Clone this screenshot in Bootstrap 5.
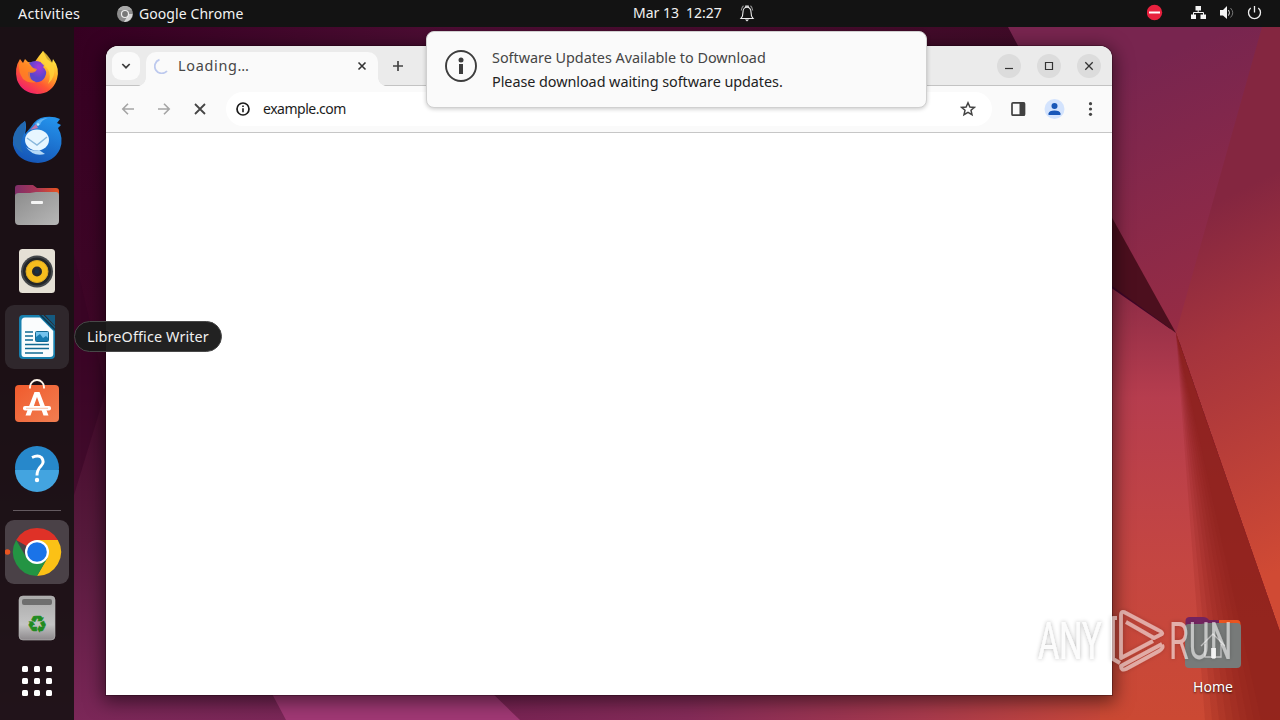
<!DOCTYPE html>
<html lang="en">
<head>
  <meta charset="UTF-8">
  <title>Ubuntu Desktop</title>
  <link href="https://cdn.jsdelivr.net/npm/bootstrap@5.3.0/dist/css/bootstrap.min.css" rel="stylesheet">
  <style>
    body {
      width: 1280px;
      height: 720px;
      font-family: "Noto Sans", "Open Sans", sans-serif;
      font-size: 14px;
      line-height: 20px;
      background: #4a1034;
    }
    svg { display: block; flex: none; }
    .wallpaper { z-index: -1; }
    .top-bar { height: 27px; background: #131313; color: #f2f2f2; }
    .top-bar .activities { margin-left: 18px; width: 99px; font-size: 14.4px; letter-spacing: .22px; }
    .top-bar .app-name { margin-left: 6px; letter-spacing: .08px; }
    .top-bar .clock { left: 633px; top: 3px; letter-spacing: -.02px; white-space: pre; }
    .top-bar .bell { left: 739px; top: 4px; }
    .dock { width: 74px; height: 693px; padding-top: 14px; background: rgba(24, 18, 20, .91); }
    .dock-item { width: 64px; height: 64px; margin-bottom: 2px; border-radius: 9px; flex: none; }
    .dock-item.hovered { background: #2f272c; }
    .dock-item.running { background: #4a4147; }
    .dock-line { width: 48px; height: 1px; margin: 7px 0 9px; background: #645a60; flex: none; }
    .dock-tip {
      left: 74px; top: 321px; width: 148px; height: 31px;
      border: 1px solid #484848; border-radius: 16px;
      background: rgba(25, 25, 25, .96); color: #f0f0f0;
    }
    .dock-tip span { font-size: 14.4px; letter-spacing: .12px; }
    .browser {
      width: 1006px; height: 649px; margin: 19px 0 0 32px;
      border-radius: 12px 12px 0 0; background: #fff;
      box-shadow: 0 0 0 1px rgba(20, 0, 10, .3), 0 4px 18px 3px rgba(0, 0, 0, .5);
    }
    .tab-strip { height: 40px; padding: 6px 11px 0 6px; background: #ebebeb; border-bottom: 1px solid #c3c3c3; border-radius: 12px 12px 0 0; }
    .tab-search { width: 28px; height: 28px; border-radius: 9px; background: #fafafa; }
    .active-tab {
      width: 232px; height: 34px; margin-left: 6px; padding: 0 8px 6px 8px;
      border-radius: 10px 10px 0 0; background: #fafafa; color: #474747;
    }
    .active-tab::before, .active-tab::after {
      content: ""; position: absolute; bottom: 0; width: 8px; height: 8px;
    }
    .active-tab::before { left: -8px; background: radial-gradient(circle at 0 0, transparent 7.5px, #fafafa 8px); }
    .active-tab::after { right: -8px; background: radial-gradient(circle at 100% 0, transparent 7.5px, #fafafa 8px); }
    .tab-title { margin-left: 8px; font-size: 14.4px; letter-spacing: .7px; }
    .win-btn { width: 24px; height: 24px; margin-top: 2px; margin-left: 16px; border-radius: 50%; background: #dcdcdc; }
    .toolbar { height: 47px; padding: 0 11px 0 12px; background: #fafafa; border-bottom: 1px solid #c6c6c6; }
    .address { width: 766px; height: 34px; margin-left: 16px; padding: 0 16px 0 9px; border-radius: 17px; background: #fff; color: #1c1c1c; }
    .address span { font-size: 14px; letter-spacing: -.48px; }
    .notice {
      left: 426px; top: 31px; width: 501px; height: 77px; padding: 18px;
      border: 1px solid #d0d0d0; border-radius: 8px; background: #fafafa;
      box-shadow: 0 1px 4px rgba(0, 0, 0, .22); color: #454545;
    }
    .notice-text { margin-left: 15px; line-height: 24px; margin-top: -4px; white-space: nowrap; font-size: 14.4px; }
    .notice-title { letter-spacing: -.02px; }
    .notice-body { color: #222; letter-spacing: -.05px; }
    .home-icon { left: 1173px; top: 612px; width: 80px; color: #fff; text-shadow: 0 1px 2px rgba(0, 0, 0, .7); }
    .home-icon span { margin-top: 5px; letter-spacing: .05px; }
    .watermark { left: 1030px; top: 600px; }
  </style>
</head>
<body class="position-relative overflow-hidden">

<svg class="wallpaper position-absolute top-0 start-0" width="1280" height="720" viewBox="0 0 1280 720">
  <defs>
    <linearGradient id="base" x1="0" y1="0" x2="0" y2="1">
      <stop offset="0" stop-color="#350021"/><stop offset=".5" stop-color="#400728"/>
      <stop offset=".75" stop-color="#571a3c"/><stop offset="1" stop-color="#7b2758"/>
    </linearGradient>
    <linearGradient id="topEdge" x1="0" y1="0" x2="1" y2="0">
      <stop offset="0" stop-color="#350021"/><stop offset=".35" stop-color="#4c0d33"/><stop offset="1" stop-color="#3d0a25"/>
    </linearGradient>
    <linearGradient id="bottomEdge" x1="490" y1="0" x2="1280" y2="0" gradientUnits="userSpaceOnUse">
      <stop offset="0" stop-color="#782353"/><stop offset=".25" stop-color="#842b58"/>
      <stop offset=".55" stop-color="#a83a4c"/><stop offset=".78" stop-color="#c74739"/><stop offset="1" stop-color="#cb4935"/>
    </linearGradient>
    <linearGradient id="upper" x1="1100" y1="80" x2="1200" y2="330" gradientUnits="userSpaceOnUse">
      <stop offset="0" stop-color="#78254f"/><stop offset="1" stop-color="#972c44"/>
    </linearGradient>
    <linearGradient id="right" x1="1180" y1="220" x2="1340" y2="540" gradientUnits="userSpaceOnUse">
      <stop offset="0" stop-color="#842640"/><stop offset=".35" stop-color="#a5343d"/><stop offset="1" stop-color="#d04a34"/>
    </linearGradient>
    <linearGradient id="lower" x1="0" y1="290" x2="0" y2="720" gradientUnits="userSpaceOnUse">
      <stop offset="0" stop-color="#8e2c46"/><stop offset=".25" stop-color="#b63d4e"/>
      <stop offset=".65" stop-color="#c54641"/><stop offset="1" stop-color="#cb4933"/>
    </linearGradient>
  </defs>
  <rect width="1280" height="720" fill="url(#base)"/>
  <path d="M74 255 106 390 74 495Z" fill="#360423" opacity=".5"/>
  <path d="M74 27H1130V60H74Z" fill="url(#topEdge)"/>
  <path d="M480 690H1280V720H480Z" fill="url(#bottomEdge)"/>
  <path d="M270 690H489L520 720H286Z" fill="#a03874"/>
  <path d="M1008 27H1280V340H1176Z" fill="url(#upper)"/>
  <path d="M1262 27H1280V632L1176 333Z" fill="url(#right)"/>
  <path d="M1100 280 1176 333 1280 632V720H1100Z" fill="url(#lower)"/>
  <!-- soft shadow along the fold, built up from overlapping wedges -->
  <g fill="#861d16" fill-opacity=".16">
    <path d="M1176 333 1280 632V720H1205Z"/><path d="M1176 333 1280 632V720H1212Z"/>
    <path d="M1176 333 1280 632V720H1219Z"/><path d="M1176 333 1280 632V720H1226Z"/>
    <path d="M1176 333 1280 632V720H1233Z"/><path d="M1176 333 1280 632V720H1240Z"/>
    <path d="M1176 333 1280 632V720H1247Z"/><path d="M1176 333 1280 632V720H1254Z"/>
    <path d="M1176 333 1280 632V720H1261Z"/>
  </g>
  <path d="M1100 196 1176 333 1100 277Z" fill="#4c0f1e"/>
</svg>

<header class="top-bar d-flex align-items-center position-relative">
  <span class="activities">Activities</span>
  <svg width="16" height="16" viewBox="0 0 16 16">
    <circle cx="8" cy="8" r="8" fill="#8b8b8b"/>
    <path d="M8 8H15.5A8 8 0 0 1 7 16L10.5 10Z" fill="#d5d5d5"/>
    <path d="M1 4A8 8 0 0 1 15 4H8Z" fill="#a9a9a9"/>
    <circle cx="8" cy="8" r="3.5" fill="#777" stroke="#eee" stroke-width="1.2"/>
  </svg>
  <span class="app-name">Google Chrome</span>
  <span class="clock position-absolute">Mar 13  12:27</span>
  <svg class="bell position-absolute" width="16" height="18" viewBox="0 0 16 18" fill="none" stroke="#eee" stroke-width="1.1">
    <path d="M2 14.5H14C12.5 13 12 11.5 12 8 12 5 10.5 3.3 8 3.3S4 5 4 8C4 11.5 3.5 13 2 14.5ZM6.8 3.3V2H9.2V3.3"/>
    <path d="M2.3 6.5Q2.6 3.2 4.5 1.8M13.7 6.5Q13.4 3.2 11.5 1.8" opacity=".6"/>
    <path d="M6 15.5H10L8 17.5Z" fill="#eee" stroke="none"/>
  </svg>
  <svg class="ms-auto" width="117" height="27" viewBox="1147 0 117 27">
    <circle cx="1154.5" cy="12.500" r="7.700" fill="#e8213e"/>
    <path d="M1149 12.500H1160" stroke="#fff" stroke-width="2"/>
    <path d="M1195.500 6H1201V10.500H1195.500ZM1191 14.500H1196V19H1191ZM1200.500 14.500H1206V19H1200.500Z" fill="#f4f4f4"/>
    <path d="M1198.200 10V12.500M1193.500 15V12.500H1203.500V15" stroke="#f4f4f4" fill="none"/>
    <path d="M1220 10H1223L1227 6V19L1223 15.500H1220Z" fill="#f4f4f4"/>
    <path d="M1228.500 10Q1230.500 12.800 1228.500 15.600" stroke="#ddd" fill="none"/>
    <path d="M1230.500 8Q1235 12.800 1230.500 17.500" stroke="#777" fill="none"/>
    <path d="M1250.700 8A6 6 0 1 0 1258.300 8M1254.500 6V12.500" stroke="#eee" stroke-width="1.300" fill="none"/>
  </svg>
  <span class="me-3"></span>
</header>

<div class="d-flex">
  <nav class="dock d-flex flex-column align-items-center">
    <!-- Firefox -->
    <div class="dock-item">
      <svg width="64" height="64" viewBox="0 0 64 64">
        <defs>
          <linearGradient id="fox" x1=".85" y1=".1" x2=".25" y2="1">
            <stop offset="0" stop-color="#fff04a"/><stop offset=".35" stop-color="#ffab26"/>
            <stop offset=".65" stop-color="#ff5633"/><stop offset="1" stop-color="#ee1a72"/>
          </linearGradient>
          <radialGradient id="globe" cx=".6" cy=".3"><stop offset="0" stop-color="#a838d8"/><stop offset="1" stop-color="#5b45cc"/></radialGradient>
        </defs>
        <path d="M15 18 18 22 20 18 23 21 29 22 34 15 38 10 42 18 47 22 48 18Q55 27 52 38 47 53 32 53 17 52 12 39 9 27 15 18Z" fill="url(#fox)"/>
        <path d="M24 22Q32 17 40 24L38 26Q43 30 40 36 37 42 30 41 22 38 23 31L31 30 27 26Z" fill="url(#globe)"/>
        <path d="M14 22Q20 21 25 26L32 28Q31 32 25 32 24 39 31 41 24 43 18 38Q13 31 14 22Z" fill="#ff8b20" opacity=".75"/>
        <path d="M38 10Q46 17 49 26 51 36 43 43 47 34 42 27 34 22 35 16Z" fill="#ffd33a" opacity=".8"/>
      </svg>
    </div>
    <!-- Thunderbird -->
    <div class="dock-item">
      <svg width="64" height="64" viewBox="0 0 64 64">
        <defs><linearGradient id="bird" x1=".7" y1="0" x2=".3" y2="1"><stop offset="0" stop-color="#2492eb"/><stop offset="1" stop-color="#1554b5"/></linearGradient></defs>
        <path d="M20 14Q22 19 20 27L26 20Q31 11 40 10 49 9 55 12L52 16 56 18 53 21Q59 31 55 42 49 55 33 56 12 55 8 38 7 24 20 14Z" fill="url(#bird)"/>
        <path d="M20 14Q22 20 18 29 14 37 18 46 8 41 8 31 10 20 20 14Z" fill="#2268b1"/>
        <path d="M30 17Q34 11 43 11 36 13 35 18Z" fill="#5fb3f4"/>
        <path d="M31 17 25 23 33 21Z" fill="#c276aa"/>
        <ellipse cx="32" cy="33" rx="12" ry="10.500" fill="#e7f6ff"/>
        <path d="M22 31 32 38 42 30" fill="none" stroke="#8ab8dc" stroke-width="1.500"/>
        <path d="M21 40Q27 45 34 43L40 47Q28 50 21 40Z" fill="#b5d9f7"/>
        <circle cx="33" cy="17.500" r="1.300" fill="#bcebff"/>
      </svg>
    </div>
    <!-- Files -->
    <div class="dock-item">
      <svg width="64" height="64" viewBox="0 0 64 64">
        <defs>
          <linearGradient id="tabs"><stop offset="0" stop-color="#7e2e68"/><stop offset=".5" stop-color="#a93756"/><stop offset="1" stop-color="#e95420"/></linearGradient>
          <linearGradient id="folder" x1="0" y1="0" x2="1" y2="1"><stop offset="0" stop-color="#8c8c8c"/><stop offset="1" stop-color="#b7b7b7"/></linearGradient>
        </defs>
        <path d="M10 15Q10 12 13 12H28L32 15H51Q54 15 54 18V26H10Z" fill="url(#tabs)"/>
        <path d="M10 23Q10 20 14 20H25L31 19H51Q54 19 54 23V48Q54 52 50 52H14Q10 52 10 48Z" fill="url(#folder)"/>
        <rect x="26" y="28" width="12" height="3" rx="1" fill="#f5f5f5"/>
      </svg>
    </div>
    <!-- Rhythmbox -->
    <div class="dock-item">
      <svg width="64" height="64" viewBox="0 0 64 64">
        <rect x="14" y="10" width="36" height="44" rx="3.500" fill="#e5e0d5"/>
        <circle cx="32" cy="32.500" r="16" fill="#44474a"/>
        <circle cx="32" cy="32.500" r="14" fill="#232629"/>
        <circle cx="32" cy="32.500" r="11" fill="#f5bd1e" stroke="#d9a521"/>
        <circle cx="32" cy="32.500" r="5" fill="#26292d"/><circle cx="32" cy="32.500" r="2.200" fill="#1a3146"/>
      </svg>
    </div>
    <!-- LibreOffice Writer -->
    <div class="dock-item hovered">
      <svg width="64" height="64" viewBox="0 0 64 64">
        <path d="M18 10H38L50 22V50Q50 54 46 54H18Q14 54 14 50V14Q14 10 18 10Z" fill="#1880ae"/>
        <path d="M20 12.500H35L48.300 26V49Q48.300 52 45 52H19Q16.500 52 16.500 49V16Q16.500 12.500 20 12.500Z" fill="#fafcfd"/>
        <path d="M40 10H50V21Z" fill="#155a80"/><path d="M37 10 50 23V26L34 10Z" fill="#0b3d59"/>
        <path d="M20 27H28M20 31H28M20 35H28M20 39.500H44M20 43.500H44M20 48H38" stroke="#126a93" stroke-width="1.700"/>
        <rect x="30.500" y="26.500" width="13" height="10" rx="1" fill="#72c2ed" stroke="#126a93"/>
        <path d="M31 36V32L35 29 38 33 41 31 43 33V36Z" fill="#167bb0"/>
      </svg>
    </div>
    <!-- Software -->
    <div class="dock-item">
      <svg width="64" height="64" viewBox="0 0 64 64">
        <defs><linearGradient id="bag" x1="0" y1="0" x2="1" y2="1"><stop offset="0" stop-color="#f05b2d"/><stop offset="1" stop-color="#f17e51"/></linearGradient></defs>
        <rect x="10" y="14" width="44" height="37" rx="4" fill="url(#bag)"/>
        <path d="M25 17.500V16A7 7 0 0 1 39 16V17.500" fill="none" stroke="#fff4e8" stroke-width="1.900"/>
        <path d="M20.500 44.500 29.500 21H34.500L43.500 44.500H38.500L32 26 25.500 44.500Z" fill="#fff"/>
        <rect x="18" y="35" width="28" height="4.600" rx="2" fill="#fff"/><path d="M21 37.300H43" stroke="#f4aa88" stroke-width=".7"/>
      </svg>
    </div>
    <!-- Help -->
    <div class="dock-item">
      <svg width="64" height="64" viewBox="0 0 64 64">
        <circle cx="32" cy="31" r="22" fill="#2788cb"/><path d="M10 33H54A22 22 0 0 1 10 33Z" fill="#43a4e0"/>
        <path d="M27 20.500Q33 17.500 36.500 20.500 40 25 36 29 32 33 32 38.500" fill="none" stroke="#fff" stroke-width="2.900"/><circle cx="32" cy="43" r="2.200" fill="#fff"/>
      </svg>
    </div>
    <div class="dock-line"></div>
    <!-- Chrome -->
    <div class="dock-item running">
      <svg width="64" height="64" viewBox="0 0 64 64">
        <circle cx="2.500" cy="32" r="2.800" fill="#e95420"/>
        <path d="M32 32 11.200 20A24 24 0 0 1 52.800 20Z" fill="#df3127"/>
        <path d="M32 20H52.800A24 24 0 0 1 32 56L42.400 38Z" fill="#fbc116"/>
        <path d="M11.200 20A24 24 0 0 0 32 56L42.400 38H21.600Z" fill="#239443"/>
        <circle cx="32" cy="32" r="12" fill="#fff"/><circle cx="32" cy="32" r="9.800" fill="#1a73e8"/>
      </svg>
    </div>
    <!-- Trash -->
    <div class="dock-item">
      <svg width="64" height="64" viewBox="0 0 64 64">
        <defs><linearGradient id="bin" x1="0" y1="0" x2="0" y2="1"><stop offset="0" stop-color="#aaa"/><stop offset=".65" stop-color="#c4c4c4"/><stop offset="1" stop-color="#8d898c"/></linearGradient></defs>
        <rect x="14" y="10" width="36" height="44" rx="4" fill="url(#bin)" stroke="#bbb" stroke-width=".6"/>
        <rect x="17" y="13" width="30" height="6" rx="2" fill="#6e6e6e"/>
        <text x="32" y="46" text-anchor="middle" font-family="DejaVu Sans, sans-serif" font-size="23" fill="#218b20" stroke="#218b20" stroke-width=".5">♻</text>
      </svg>
    </div>
    <!-- Show applications -->
    <div class="dock-item">
      <svg width="64" height="64" viewBox="0 0 64 64" fill="#fff">
        <g id="dots"><rect x="17" y="14" width="6" height="6" rx="1.500"/><rect x="29" y="14" width="6" height="6" rx="1.500"/><rect x="41" y="14" width="6" height="6" rx="1.500"/></g>
        <use href="#dots" y="12"/><use href="#dots" y="24"/>
      </svg>
    </div>
  </nav>

  <main class="browser">
    <div class="tab-strip d-flex">
      <div class="tab-search d-flex align-items-center justify-content-center">
        <svg width="10" height="8" viewBox="0 0 10 8"><path d="M1.300 2 5 5.700 8.700 2" fill="none" stroke="#3d3d3d" stroke-width="1.700"/></svg>
      </div>
      <div class="active-tab position-relative d-flex align-items-center">
        <svg width="16" height="16" viewBox="0 0 16 16"><path d="M5.500 1.700A7 7 0 1 0 13 13" fill="none" stroke="#bdc9ee" stroke-width="1.800"/></svg>
        <span class="tab-title">Loading…</span>
        <svg class="ms-auto" width="16" height="16" viewBox="0 0 16 16"><path d="M4.500 4.500 11.500 11.500M11.500 4.500 4.500 11.500" stroke="#333" stroke-width="1.600"/></svg>
      </div>
      <svg class="ms-2" width="24" height="28" viewBox="0 0 24 28"><path d="M12 9V19M7 14H17" stroke="#444" stroke-width="1.700"/></svg>
      <div class="d-flex ms-auto">
        <div class="win-btn"><svg width="24" height="24" viewBox="0 0 24 24"><path d="M8 14.500H16" stroke="#333" stroke-width="1.200"/></svg></div>
        <div class="win-btn"><svg width="24" height="24" viewBox="0 0 24 24"><path d="M8.500 8.500H15.500V15.500H8.500Z" fill="none" stroke="#333" stroke-width="1.200"/></svg></div>
        <div class="win-btn"><svg width="24" height="24" viewBox="0 0 24 24"><path d="M8.300 8.300 15.700 15.700M15.700 8.300 8.300 15.700" stroke="#333" stroke-width="1.300"/></svg></div>
      </div>
    </div>
    <div class="toolbar d-flex align-items-center">
      <svg width="92" height="20" viewBox="0 0 92 20" fill="none" stroke="#a5a5a5" stroke-width="1.600">
        <path d="M16 10H5M10 4.800 4.800 10 10 15.200M40 10H51M46 4.800 51.200 10 46 15.200"/>
        <path d="M77 5 87 15M87 5 77 15" stroke="#454545" stroke-width="1.800"/>
      </svg>
      <div class="address d-flex align-items-center">
        <svg width="16" height="16" viewBox="0 0 16 16"><circle cx="8" cy="8" r="6" fill="none" stroke="#1c1c1c" stroke-width="1.700"/><path d="M8 7.200V11.300M8 4.500V6" stroke="#1c1c1c" stroke-width="1.600"/></svg>
        <span class="ms-2 ps-1">example.com</span>
        <svg class="ms-auto" width="16" height="16" viewBox="0 0 16 16"><path d="M8 1.800 9.900 6 14.300 6.400 11 9.300 12 13.700 8 11.400 4 13.700 5 9.300 1.700 6.400 6.100 6Z" fill="none" stroke="#444" stroke-width="1.500"/></svg>
      </div>
      <svg class="ms-auto" width="92" height="24" viewBox="0 0 92 24">
        <rect x="3" y="5.800" width="12.500" height="12.400" rx="1" fill="none" stroke="#414141" stroke-width="1.700"/><path d="M10.500 5.500H15.500V18.500H10.500Z" fill="#414141"/>
        <circle cx="45.500" cy="12" r="10" fill="#d3e3fd"/><circle cx="45.500" cy="9" r="3" fill="#1857b8"/><path d="M39.500 18V16.500Q40 13.500 45.500 13.500T51.500 16.500V18Z" fill="#1857b8"/>
        <g fill="#444"><circle cx="81.500" cy="6.700" r="1.600"/><circle cx="81.500" cy="12" r="1.600"/><circle cx="81.500" cy="17.300" r="1.600"/></g>
      </svg>
    </div>
  </main>
</div>

<div class="home-icon position-absolute d-flex flex-column align-items-center">
  <svg width="60" height="60" viewBox="0 0 60 60">
    <path d="M24 8H54Q57.500 8 57.500 12V20H24Z" fill="#e95420"/><path d="M2.500 9Q2.500 5 7 5H20Q24 5 26 8H36V20H2.500Z" fill="#73235f"/>
    <path d="M2 15Q2 12 6 12H18L24 11H54Q58 11 58 15V52Q58 56 54 56H6Q2 56 2 52Z" fill="#777a79"/>
    <path d="M18 34 30 22 42 34M22 32V45H38V32" fill="none" stroke="#c5c5c5" stroke-width="1.300"/><path d="M28 36H33V46H28Z" fill="#f0f0f0"/>
  </svg>
  <span>Home</span>
</div>

<svg class="watermark position-absolute" width="250" height="86" viewBox="1030 600 250 86">
  <defs><filter id="halo" x="-10%" y="-10%" width="120%" height="120%"><feDropShadow dx="0" dy="0" stdDeviation="2" flood-color="#000" flood-opacity=".35"/></filter></defs>
  <g filter="url(#halo)" fill="#fff" font-family="Roboto, sans-serif" font-weight="400" font-size="51">
    <text transform="translate(1038 659) scale(.64 1)" opacity=".85">ANY</text>
    <text transform="translate(1169 659) scale(.63 1)" opacity=".55">RUN</text>
    <g fill="none" stroke="#fff" stroke-width="3.800" stroke-linejoin="round" opacity=".52">
      <path d="M1117 618H1113V659L1120 663"/>
      <path d="M1126 622 1154 638 1162 634Q1163 632 1158 630L1124 612Q1121 611 1121 615V658L1153 641"/>
      <path d="M1162 645Q1164 648 1159 651L1126 669Q1121 671 1121 666L1162 644"/>
    </g>
  </g>
</svg>

<aside class="notice position-absolute d-flex">
  <svg width="32" height="32" viewBox="0 0 32 32"><circle cx="16" cy="16" r="15" fill="none" stroke="#3d3d3d" stroke-width="1.900"/><circle cx="16" cy="10" r="2.500" fill="#3d3d3d"/><path d="M16 14V24" stroke="#3d3d3d" stroke-width="4"/></svg>
  <div class="notice-text">
    <div class="notice-title">Software Updates Available to Download</div>
    <div class="notice-body">Please download waiting software updates.</div>
  </div>
</aside>

<div class="dock-tip position-absolute d-flex align-items-center justify-content-center"><span>LibreOffice Writer</span></div>

<script src="https://cdn.jsdelivr.net/npm/bootstrap@5.3.0/dist/js/bootstrap.bundle.min.js"></script>
</body>
</html>
